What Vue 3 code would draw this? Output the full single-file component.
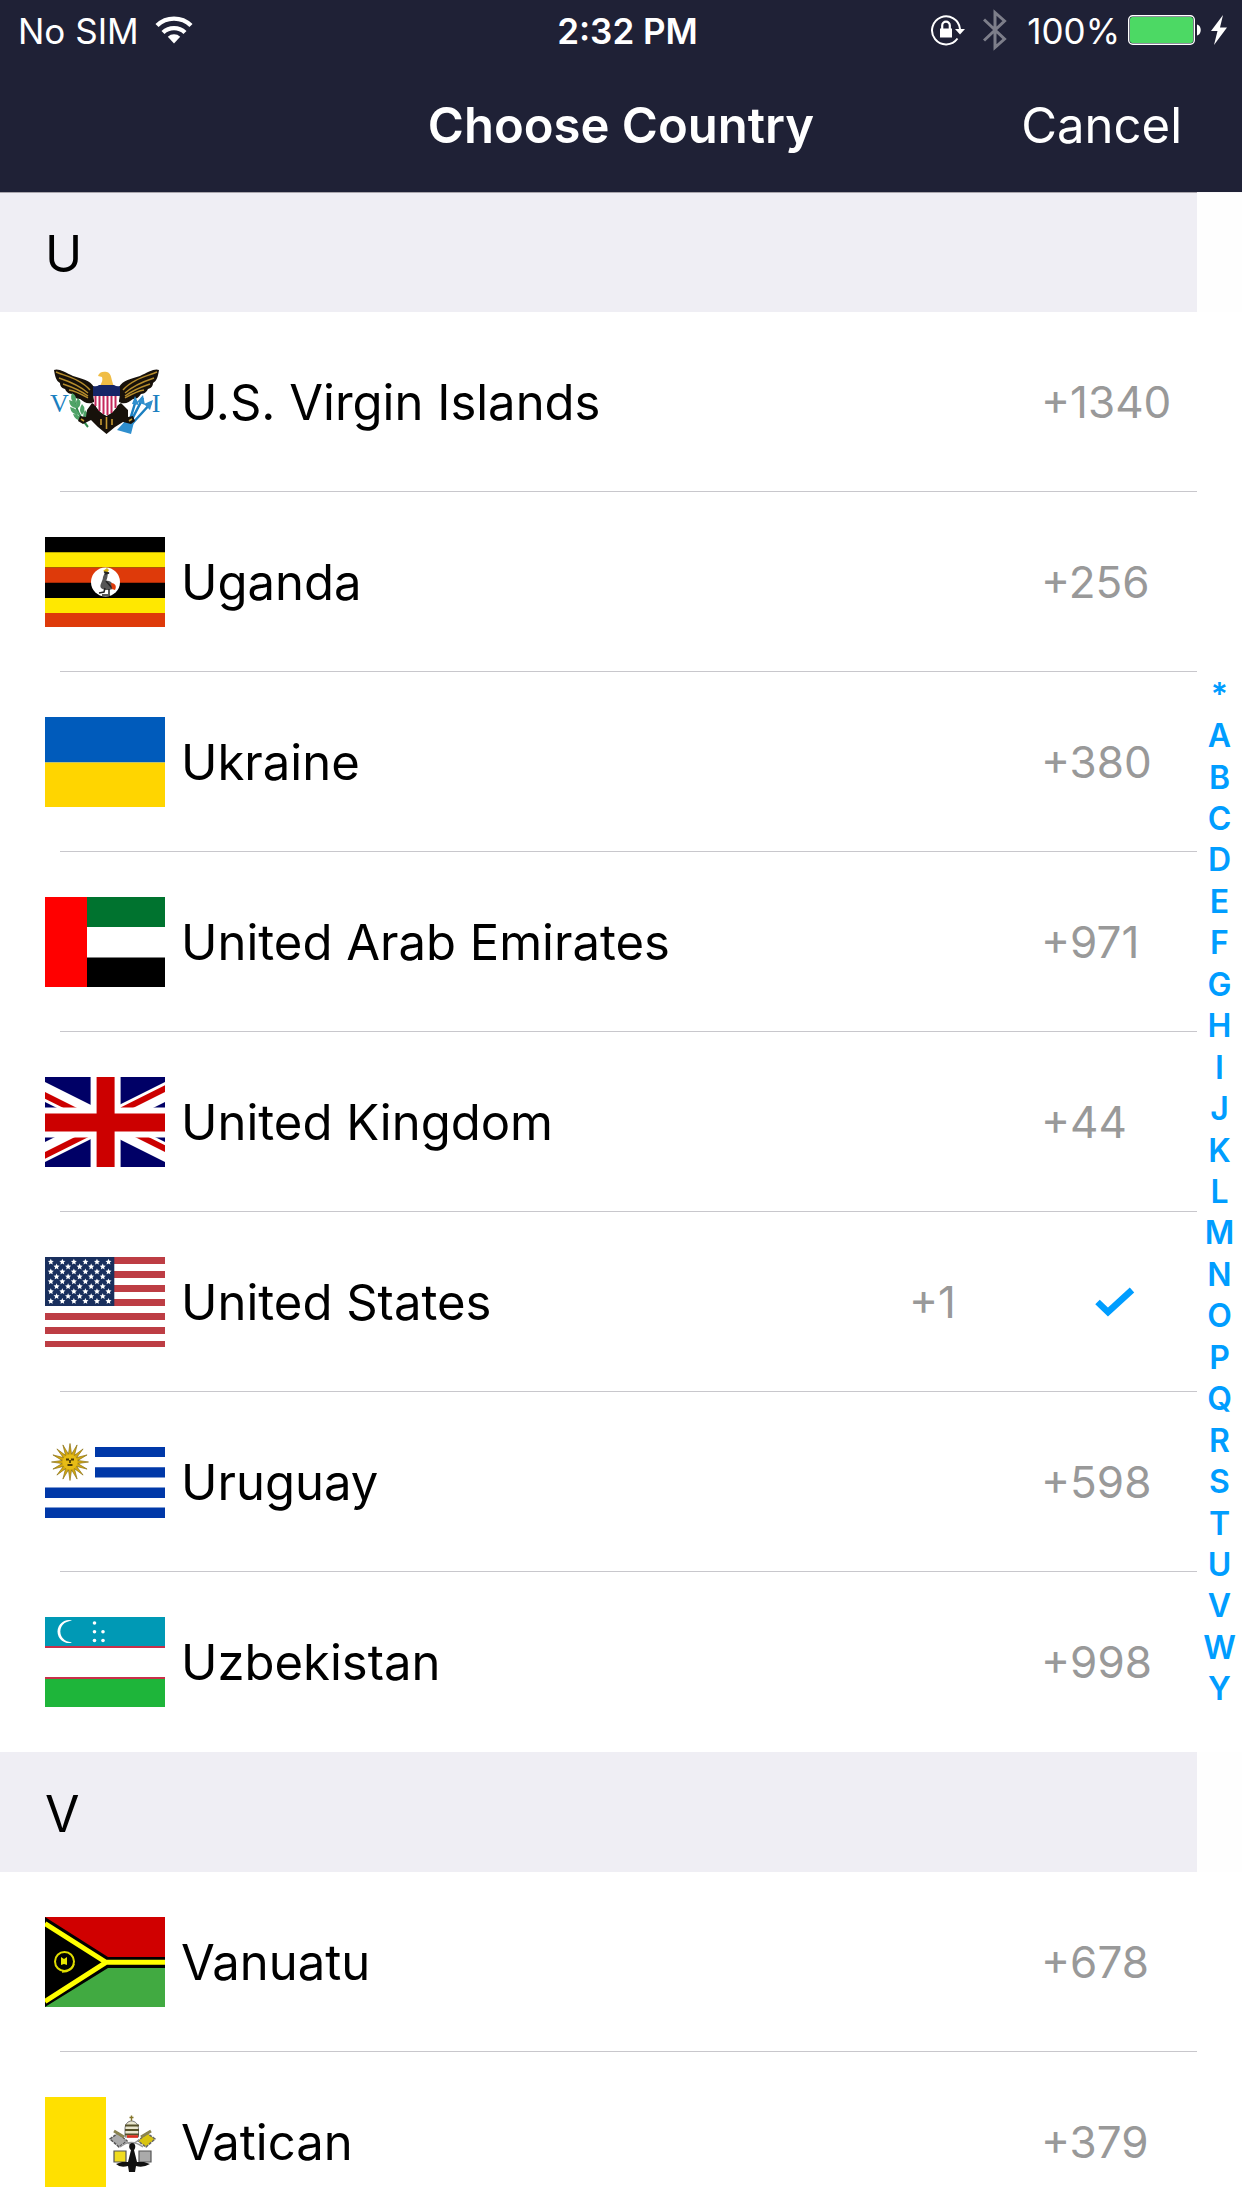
<script setup>
import { ref } from 'vue'

const selected = ref('us')

const sections = [
  {
    letter: 'U',
    countries: [
      { id: 'vi', name: 'U.S. Virgin Islands', code: '+1340' },
      { id: 'ug', name: 'Uganda', code: '+256' },
      { id: 'ua', name: 'Ukraine', code: '+380' },
      { id: 'ae', name: 'United Arab Emirates', code: '+971' },
      { id: 'gb', name: 'United Kingdom', code: '+44' },
      { id: 'us', name: 'United States', code: '+1' },
      { id: 'uy', name: 'Uruguay', code: '+598' },
      { id: 'uz', name: 'Uzbekistan', code: '+998' },
    ],
  },
  {
    letter: 'V',
    countries: [
      { id: 'vu', name: 'Vanuatu', code: '+678' },
      { id: 'va', name: 'Vatican', code: '+379' },
    ],
  },
]

const index = [...'*ABCDEFGHIJKLMNOPQRSTUVWY']

// Fifty stars in nine alternating rows of six and five.
const stars = []
for (let row = 0; row < 9; row++) {
  const odd = row % 2
  for (let col = 0; col < (odd ? 5 : 6); col++) {
    stars.push({ x: 5.8 + (odd ? 5.77 : 0) + col * 11.54, y: 4.9 + row * 4.92 })
  }
}

function burst(cx, cy, points, outer, inner) {
  const out = []
  for (let i = 0; i < points * 2; i++) {
    const r = i % 2 ? inner : outer
    const a = (Math.PI * i) / points - Math.PI / 2
    out.push(`${(cx + r * Math.cos(a)).toFixed(2)},${(cy + r * Math.sin(a)).toFixed(2)}`)
  }
  return out.join(' ')
}
</script>

<template>
  <div class="screen">
    <header class="top">
      <div class="status">
        <div class="status-left">
          <span>No SIM</span>
          <svg width="38" height="28" viewBox="0 0 38 28" aria-hidden="true">
            <g fill="none" stroke="#fff" stroke-width="4.4">
              <path d="M2 9.5a24.5 24.5 0 0 1 34 0" />
              <path d="M8 16.500a16 16 0 0 1 22 0" />
            </g>
            <path d="M19 27.5l-6.200-6.700a9 9 0 0 1 12.400 0z" fill="#fff" />
          </svg>
        </div>
        <span class="time">2:32 PM</span>
        <div class="status-right">
          <svg class="lock" width="34" height="32" viewBox="0 0 34 32" aria-hidden="true">
            <path d="M26.500 24.500A14 14 0 1 1 29 15" fill="none" stroke="#fff" stroke-width="2" />
            <path d="M24 15h10l-5 5.500z" fill="#fff" />
            <path d="M9 14.500h12v9H9z" fill="#fff" />
            <path d="M11.200 15v-3.500a3.800 3.800 0 0 1 7.600 0V15" fill="none" stroke="#fff" stroke-width="2.200" />
          </svg>
          <svg class="bluetooth" width="24" height="42" viewBox="0 0 24 42" aria-hidden="true">
            <path d="M1 10.500l20.500 19.500L12 38.500V3.500l9.500 8.500L1 31.500" fill="none" stroke="#7d7e8a" stroke-width="3" />
          </svg>
          <span>100%</span>
          <svg class="battery" width="74" height="30" viewBox="0 0 74 30" aria-hidden="true">
            <rect x="0.700" y="0.700" width="65.600" height="28.600" rx="4" fill="none" stroke="#fff" stroke-width="1.400" />
            <rect x="2" y="2" width="63" height="26" rx="2.500" fill="#4cd964" />
            <path d="M69 9.500c5 1 5 10 0 11z" fill="#fff" />
          </svg>
          <svg width="16" height="30" viewBox="0 0 16 30" aria-hidden="true">
            <path d="M12 0L0 16h6.500L3 30 16 12.500H9z" fill="#fff" />
          </svg>
        </div>
      </div>
      <div class="nav">
        <h1>Choose Country</h1>
        <button type="button" class="cancel">Cancel</button>
      </div>
    </header>

    <main class="body">
      <div class="list">
        <section v-for="s in sections" :id="'section-' + s.letter" :key="s.letter">
          <h2>{{ s.letter }}</h2>
          <ul>
            <li v-for="c in s.countries" :key="c.id">
              <button type="button" class="row" :aria-pressed="selected === c.id" @click="selected = c.id">
                <svg class="flag" viewBox="0 0 120 90" aria-hidden="true">
                  <g v-if="c.id === 'vi'">
                    <text x="14.500" y="55" class="seal">V</text>
                    <text x="111" y="55" class="seal">I</text>
                    <g>
                      <path d="M9 13c4-2 11 2 19 6 9 3 17 4 21 11v15c-6 3-10 0-14-3-4 0-6-2-8-5-4 0-6-3-7-5-4-1-5-4-5-6-4-2-5-7-6-13z" fill="#17110a" />
                      <path d="M11 15c9 4 25 7 34 18M14 21c9 3 20 7 29 15M18 27c9 3 17 6 25 12M24 33c7 1 12 4 19 8" fill="none" stroke="#b58c2c" stroke-width="1.400" />
                    </g>
                    <g transform="matrix(-1 0 0 1 123 0)">
                      <path d="M9 13c4-2 11 2 19 6 9 3 17 4 21 11v15c-6 3-10 0-14-3-4 0-6-2-8-5-4 0-6-3-7-5-4-1-5-4-5-6-4-2-5-7-6-13z" fill="#17110a" />
                      <path d="M11 15c9 4 25 7 34 18M14 21c9 3 20 7 29 15M18 27c9 3 17 6 25 12M24 33c7 1 12 4 19 8" fill="none" stroke="#b58c2c" stroke-width="1.400" />
                    </g>
                    <path d="M28 38c2 12 6 22 15 32" fill="none" stroke="#2f8a4c" stroke-width="2" />
                    <path d="M27 36q6 3 3 10-6-3-3-10zM24 43q7 1 9 8-8 1-9-8zM33 41q5 5 0 10-4-5 0-10zM25 50q7 1 10 8-9 0-10-8zM37 47q5 5 0 11-4-5 0-11zM28 57q7 0 10 7-8 0-10-7zM40 53q5 5 1 11-5-5-1-11z" fill="#4fa367" />
                    <path d="M98 41L82 72M91 43L84 66M106 46L85 69" stroke="#1b7fc0" stroke-width="2.500" />
                    <path d="M98 38l2 10-8-3zM90 39l4 9-7-1zM108 43l-3 10-6-6zM82 62l7 3-3 12-14-4z" fill="#2f8fce" />
                    <path d="M47 46l14.500 10L76 46l7 7 0 7 5-1 2 5-4 3-8-2-8 5-8.500 7-8.500-7-7-7-8 4-5-3 2-5 6 1 1-7z" fill="#17110a" />
                    <path d="M61.500 60v12M56 62v6M67 62v6M36 62l3 2M87 62l-3 2" stroke="#c69a32" stroke-width="1.600" />
                    <path d="M55 29c2-4 3-6 2-9l-4-1c1-4 5-5 9-4 5 1 4 9 7 14z" fill="#f0bd45" />
                    <path d="M48 30h27c0 16-2 23-13.500 29C50 53 48 46 48 30z" fill="#fff" />
                    <path d="M50.500 38v11M54.500 38v16M58.500 38v19M62.500 38v20M66.500 38v18M70.500 38v13" stroke="#c4285b" stroke-width="2" />
                    <path d="M48 29q4 1 6-1h15q3 2 6 1v10H48z" fill="#162667" />
                  </g>
                  <g v-else-if="c.id === 'ug'">
                    <path d="M0 0h120v90H0z" fill="#000" />
                    <path d="M0 15.300h120v15.200H0zM0 61h120v15H0z" fill="#ffe800" />
                    <path d="M0 30.500h120v15.200H0zM0 76h120v14H0z" fill="#de3a0a" />
                    <circle cx="60.500" cy="45" r="14.500" fill="#fff" />
                    <path d="M58 34l4-3 2 2-2 3z" fill="#d9b310" />
                    <path d="M60 35c4-1 3 5 1 9 5-1 8 3 7 8-4 1-8 2-12-1-2-3 2-7 2-11z" fill="#555" />
                    <path d="M59 35l5 1-4 1M60 51l-1 4-5 1M64 52v5M57 58h8M61 44l6 7" fill="none" stroke="#222" stroke-width="1.500" />
                    <path d="M66 46c4 0 6 3 4 7l-3-1z" fill="#de3a0a" />
                  </g>
                  <g v-else-if="c.id === 'ua'">
                    <path d="M0 0h120v45.500H0z" fill="#005bbb" />
                    <path d="M0 45.500h120V90H0z" fill="#ffd500" />
                  </g>
                  <g v-else-if="c.id === 'ae'">
                    <path d="M0 0h120v30H0z" fill="#00732f" />
                    <path d="M0 60.500h120V90H0z" fill="#000" />
                    <path d="M0 0h42v90H0z" fill="#f00" />
                  </g>
                  <svg v-else-if="c.id === 'gb'" width="120" height="90" viewBox="10 0 40 30">
                    <clipPath id="saltire"><path d="M30 15h30v15zv15H0zH0V0zV0h30z" /></clipPath>
                    <path d="M0 0h60v30H0z" fill="#006" />
                    <path d="M0 0l60 30m0-30L0 30" stroke="#fff" stroke-width="6" />
                    <path d="M0 0l60 30m0-30L0 30" clip-path="url(#saltire)" stroke="#c00" stroke-width="4" />
                    <path d="M30.200 0v30M0 15.200h60" stroke="#fff" stroke-width="10" />
                    <path d="M30.200 0v30M0 15.200h60" stroke="#c00" stroke-width="6" />
                  </svg>
                  <g v-else-if="c.id === 'us'">
                    <path d="M0 0h120v90H0z" fill="#fff" />
                    <rect v-for="n in 7" :key="n" x="0" :y="(n - 1) * 14" width="120" height="7" fill="#bd3d44" />
                    <path d="M0 0h69.300v49H0z" fill="#192f5d" />
                    <polygon v-for="(p, i) in stars" :key="i" :points="burst(p.x, p.y, 5, 3.2, 1.5)" fill="#fff" />
                  </g>
                  <g v-else-if="c.id === 'uy'">
                    <path d="M50 10h70v10H50zM50 30.300h70v10.300H50zM0 50.500h120v10.400H0zM0 70.500h120V81H0z" fill="#0038a8" />
                    <polygon :points="burst(25, 25, 16, 18.5, 8)" fill="#d4a80e" stroke="#8a7012" stroke-width="0.700" />
                    <circle cx="25" cy="25" r="7.500" fill="#e6bc16" />
                    <path d="M21 22.500h3M26 22.500h3M25 23v3M22.500 28h5" stroke="#4a3903" stroke-width="1.800" />
                  </g>
                  <g v-else-if="c.id === 'uz'">
                    <path d="M0 0h120v29H0z" fill="#0099b5" />
                    <path d="M0 29h120v2H0zM0 60h120v2.500H0z" fill="#c9304a" />
                    <path d="M0 62h120v28H0z" fill="#1eb53a" />
                    <path d="M27 3.500a11.500 11.500 0 1 0 0 22.200 12.500 11.500 0 0 1 0-22.200z" fill="#fff" />
                    <path d="M29 4.500a10.500 10.500 0 1 0 0 20z" fill="#0099b5" />
                    <g fill="#fff">
                      <circle cx="49.500" cy="6" r="1.800" />
                      <circle cx="49.500" cy="14.800" r="1.800" />
                      <circle cx="58" cy="14.800" r="1.800" />
                      <circle cx="49.500" cy="23.500" r="1.800" />
                      <circle cx="58" cy="23.500" r="1.800" />
                    </g>
                  </g>
                  <g v-else-if="c.id === 'vu'">
                    <path d="M0 0h120v46H0z" fill="#d00000" />
                    <path d="M0 46h120v44H0z" fill="#41aa41" />
                    <path d="M0 0l63 40h57v11H63L0 90z" fill="#000" />
                    <path d="M0 6.500l61 38.800h59M0 84.500l61-39.200" fill="none" stroke="#ff0" stroke-width="5" />
                    <circle cx="19.500" cy="44.500" r="9.500" fill="none" stroke="#e0dc00" stroke-width="2" />
                    <path d="M17 55c7 0 11-4 12-8" fill="none" stroke="#e0dc00" stroke-width="1.600" />
                    <path d="M16 40l3 2 3-2v8l-3-1-3 1z" fill="#e8e400" />
                  </g>
                  <g v-else>
                    <path d="M0 0h61v90H0z" fill="#ffe000" />
                    <path d="M65 42l8-6 9 8-8 6z" fill="#aaa" stroke="#555" stroke-width="1.500" stroke-dasharray="3 1" />
                    <path d="M110 42l-8-6-9 8 8 6z" fill="#d9c410" stroke="#666" stroke-width="1.500" stroke-dasharray="3 1" />
                    <path d="M69 34l10 6M106 34l-10 6" stroke="#8a8350" stroke-width="3" />
                    <path d="M86.500 18.500v6M84.500 20.500h4" stroke="#85762b" stroke-width="1.400" />
                    <path d="M80 40v-8c0-5 3-8 6.500-8s7 3 7 8v8z" fill="#e9e6cf" stroke="#777" stroke-width="1" />
                    <path d="M80 28.500h14M80 33h14M80 37.500h14" stroke="#55502a" stroke-width="1.800" />
                    <path d="M82 39.500h11" stroke="#e02d20" stroke-width="2.500" />
                    <path d="M75 50q11-9 23 0M79 43l7 5 8-5" fill="none" stroke="#999" stroke-width="1.400" />
                    <path d="M69 54h12v11H69z" fill="#f0dc20" stroke="#555" stroke-width="1.200" />
                    <path d="M94 54h12v11H94z" fill="#aaa" stroke="#555" stroke-width="1.200" />
                    <path d="M87 46c4 0 4 5 2 7l3 12h7l6 2q-7 4-14 2l-1 6h-6l-1-6q-8 2-12-2l6-2h6l3-12c-3-2-2-7 1-7z" fill="#111" />
                  </g>
                </svg>
                <span class="name">{{ c.name }}</span>
                <span class="code">{{ c.code }}</span>
                <span v-if="selected === c.id" class="accessory">
                  <svg width="40" height="30" viewBox="0 0 40 30" aria-hidden="true">
                    <path d="M2.500 15l10.500 10L37 3" fill="none" stroke="#009dff" stroke-width="6.500" />
                  </svg>
                </span>
              </button>
            </li>
          </ul>
        </section>
      </div>

      <nav class="index" aria-label="Country index">
        <ul>
          <li v-for="l in index" :key="l"><a :href="'#section-' + l">{{ l }}</a></li>
        </ul>
      </nav>
    </main>
  </div>
</template>

<style>
body {
  margin: 0;
  background: #fff;
}
</style>

<style scoped>
.screen {
  display: flex;
  flex-direction: column;
  height: 100vh;
  overflow: hidden;
  background: #fff;
  color: #000;
  font-family: Inter, 'Liberation Sans', sans-serif;
}

h1,
h2,
ul {
  margin: 0;
  padding: 0;
  font-weight: 400;
  list-style: none;
}

button {
  margin: 0;
  padding: 0;
  border: 0;
  background: none;
  color: inherit;
  font: inherit;
  text-align: left;
  cursor: pointer;
}

svg {
  display: block;
  flex: none;
}

.top {
  flex: none;
  background: #1f2136;
  color: #fff;
}

.status {
  display: flex;
  align-items: center;
  height: 60px;
  padding: 0 15px 0 18px;
  font-size: 35px;
  line-height: 42px;
}

.status span {
  padding-top: 2px;
}

.status-left,
.status-right {
  display: flex;
  flex: 1 1 0;
  align-items: center;
}

.status-left {
  gap: 16px;
}

.status-right {
  justify-content: flex-end;
}

.time {
  padding-left: 10px;
  font-weight: 600;
}

.lock {
  margin-right: 18px;
}

.bluetooth {
  margin-right: 20px;
}

.battery {
  margin: 0 9px 0 8px;
}

.nav {
  display: grid;
  grid-template-columns: 1fr auto 1fr;
  align-items: center;
  height: 132px;
  padding: 0 60px;
  font-size: 49px;
  line-height: 60px;
}

.nav h1 {
  grid-column: 2;
  font-size: 49px;
  font-weight: 600;
}

.cancel {
  justify-self: end;
}

.body {
  position: relative;
  flex: 1;
  min-height: 0;
}

.list {
  height: 100%;
  overflow: hidden;
}

h2 {
  box-sizing: border-box;
  height: 120px;
  padding: 2px 0 0 45px;
  background: #efeef4;
  font-size: 50px;
  line-height: 120px;
}

section:first-child h2 {
  box-shadow: inset 0 1px #a9a6ad;
}

.row {
  display: flex;
  align-items: center;
  width: 100%;
  height: 179px;
  padding: 0 45px;
}

.list li::after {
  content: '';
  display: block;
  height: 1px;
  margin: 0 45px 0 60px;
  background: #c8c7cc;
}

.list li:last-child::after {
  background: none;
}

.flag {
  width: 120px;
  height: 90px;
  margin-right: 16px;
}

.seal {
  fill: #1b7fc0;
  font-family: 'Liberation Serif', serif;
  font-size: 26px;
  text-anchor: middle;
}

.name {
  flex: 1;
  padding-top: 2px;
  font-size: 49px;
  line-height: 60px;
}

.code {
  width: 156px;
  padding-top: 1px;
  color: #999;
  font-size: 44px;
  line-height: 54px;
}

.accessory {
  width: 102px;
  padding-left: 30px;
}

.index {
  position: absolute;
  top: 0;
  right: 0;
  bottom: 0;
  display: flex;
  align-items: center;
  width: 45px;
  padding-bottom: 16px;
  background: rgba(255, 255, 255, 0.9);
}

.index ul {
  display: grid;
  grid-auto-rows: 1fr;
  width: 100%;
  height: 1036px;
}

.index li {
  display: flex;
  align-items: center;
  justify-content: center;
}

.index a {
  color: #009dff;
  font-size: 32px;
  font-weight: 600;
  line-height: 40px;
  text-decoration: none;
}
</style>
